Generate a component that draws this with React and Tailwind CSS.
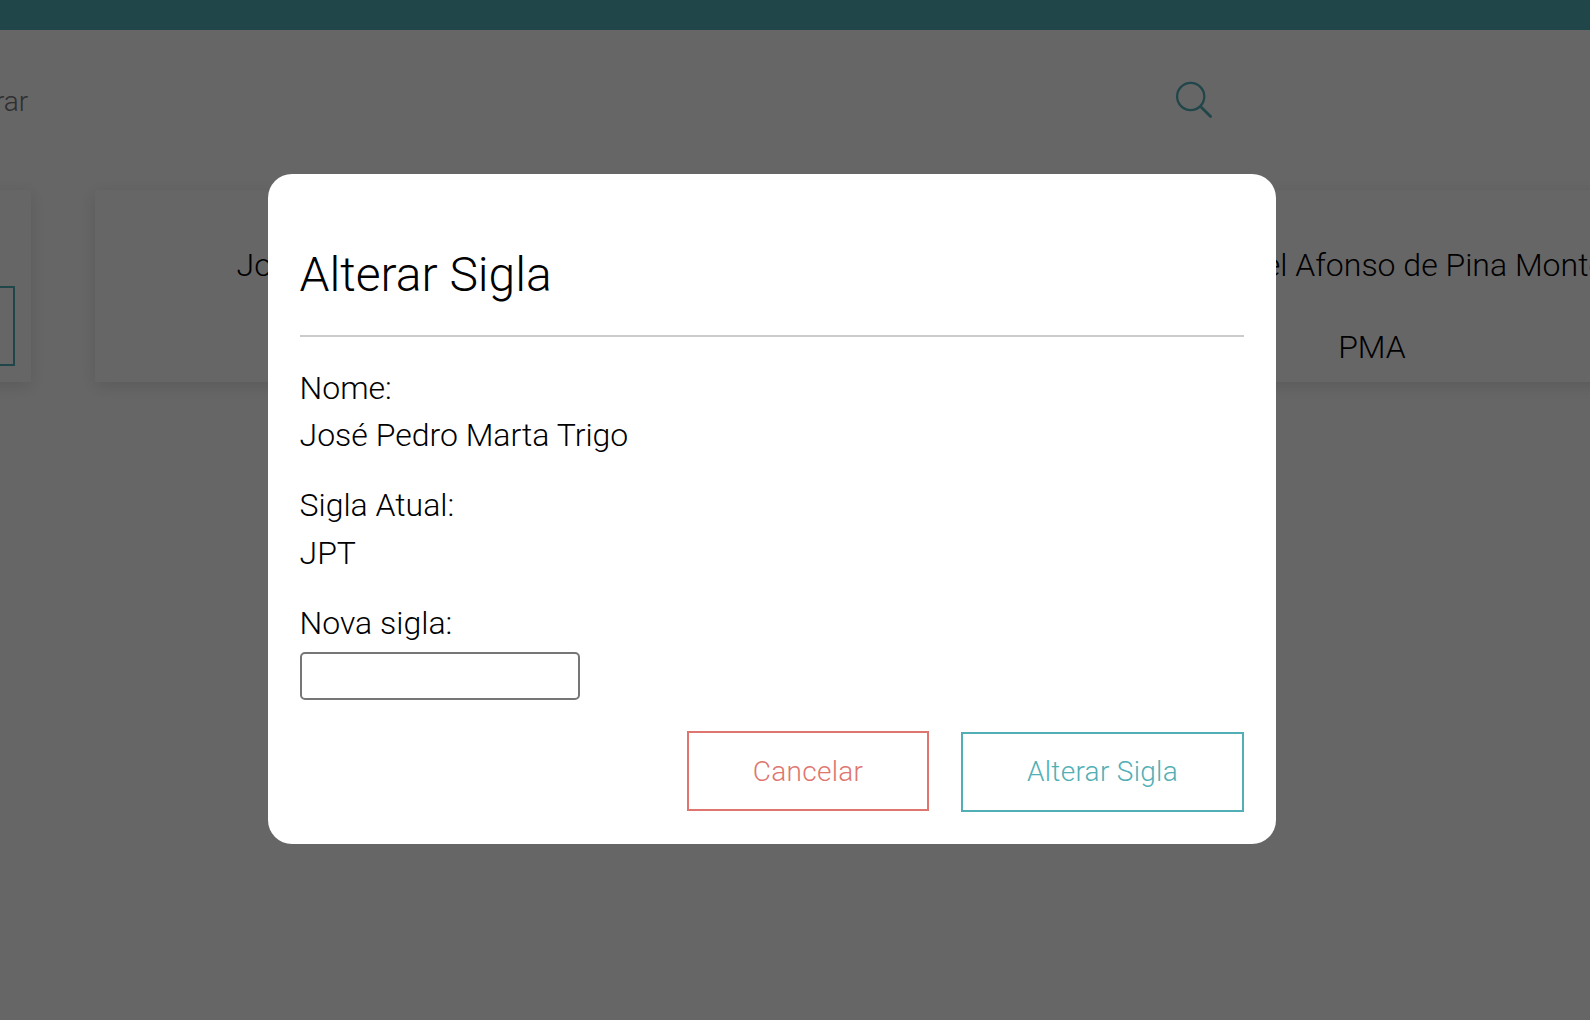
import React from "react";

function SearchIcon() {
  return (
    <svg className="h-[38px] w-[38px]" viewBox="0 0 38 38" fill="none" stroke="#52afb6">
      <circle cx="15.7" cy="15.5" r="13.6" strokeWidth="2.3" />
      <path d="M26.5 26.5 L35.6 35.6" strokeWidth="2.8" strokeLinecap="round" />
    </svg>
  );
}

function Card({ children }) {
  return (
    <section className="h-48 w-[809px] shrink-0 bg-white pt-[53px] text-[32px] leading-[44px] whitespace-nowrap shadow-[0_4px_16px_rgba(0,0,0,0.12)]">
      {children}
    </section>
  );
}

function Field({ label, children }) {
  return (
    <div className="mb-[23px]">
      <div className="leading-[47px]">{label}</div>
      <div className="leading-[47px]">{children}</div>
    </div>
  );
}

export default function App() {
  return (
    <div className="relative h-[1020px] w-[1590px] overflow-hidden bg-white font-['Roboto',sans-serif] font-light text-black">
      <header className="h-[30px] bg-[#52afb6]" />
      <div className="flex h-40 items-start justify-between pr-[377px]">
        <span className="-ml-[77px] pt-[55px] text-[28px] leading-[34px] text-[#757575]">Procurar</span>
        <span className="pt-[51px]">
          <SearchIcon />
        </span>
      </div>
      <div className="-ml-[778px] flex gap-16">
        <Card>
          <div className="mt-[43px] ml-[553px] h-20 w-60 border-2 border-[#52afb6]" />
        </Card>
        <Card>
          <p className="pl-[141.5px]">José Pedro Marta Trigo</p>
        </Card>
        <Card>
          <p className="pl-[225.5px]">Miguel Afonso de Pina Monteiro</p>
          <p className="mt-[38px] pr-px text-center">PMA</p>
        </Card>
      </div>

      <div className="absolute inset-0 flex items-start bg-black/60 pt-[174px] pl-[268px]">
        <main className="h-[670px] w-[1008px] rounded-3xl bg-white px-8 text-[32px]">
          <h1 className="border-b-2 border-[#cccccc] pt-[73px] pb-8 text-[48px] leading-[56px]">
            <span className="-ml-[0.5px]">Alterar Sigla</span>
          </h1>
          <div className="-ml-[0.5px] pt-[28px]">
            <Field label="Nome:">José Pedro Marta Trigo</Field>
            <Field label="Sigla Atual:">
              <span className="block pt-px">JPT</span>
            </Field>
            <label className="block">
              <span className="block leading-[47px]">Nova sigla:</span>
              <input className="mt-[5px] ml-[0.5px] block h-12 w-[280px] rounded-[5px] border-2 border-[#767676] bg-white px-1 outline-none" />
            </label>
          </div>
          <div className="mt-[31px] flex items-start justify-end gap-8 text-[28px] tracking-[0.3px]">
            <button className="h-20 w-[242px] border-2 border-[#de766f] pt-0.5 text-[#de766f]">Cancelar</button>
            <button className="mt-px h-20 w-[283px] border-2 border-[#52afb6] text-[#52afb6]">Alterar Sigla</button>
          </div>
        </main>
      </div>
    </div>
  );
}
